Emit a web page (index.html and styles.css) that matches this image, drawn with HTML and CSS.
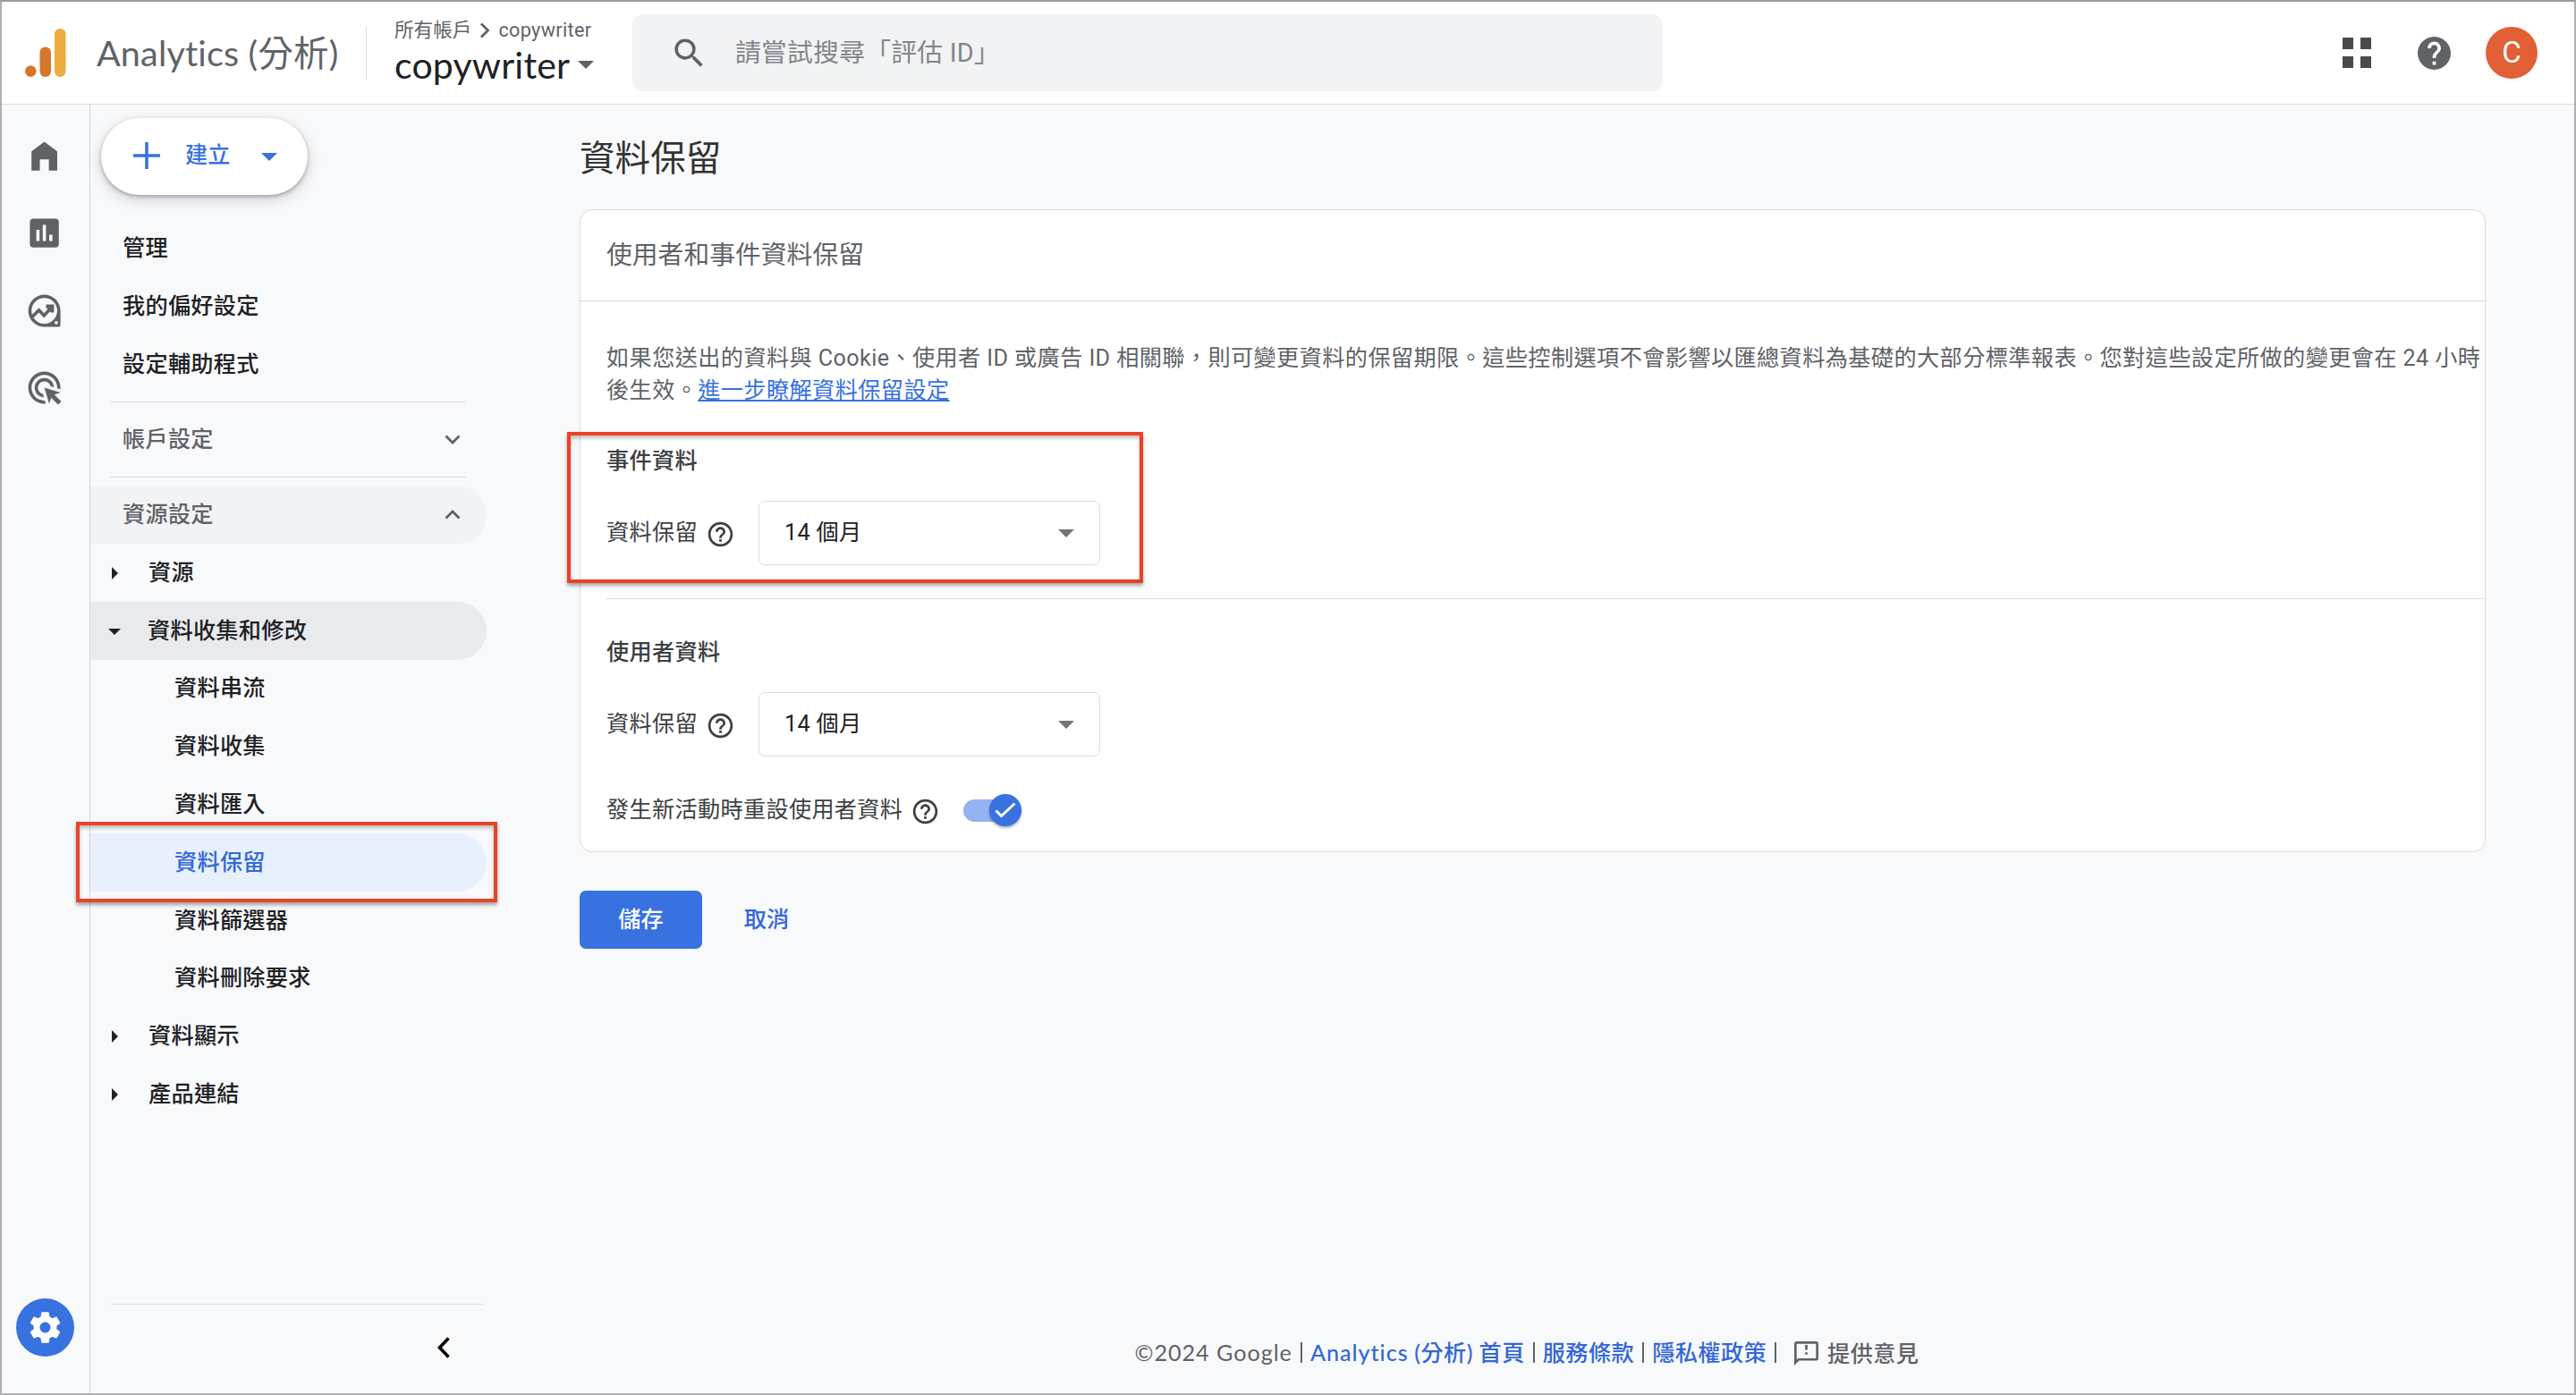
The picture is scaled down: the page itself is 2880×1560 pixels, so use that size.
FILE: index.html
```html
<!DOCTYPE html>
<html lang="zh-TW">
<head>
    <meta charset="UTF-8">
    <meta name="viewport" content="width=device-width, initial-scale=1.0">
    <title>Analytics (分析)</title>
    <link rel="stylesheet" href="styles.css">
</head>
<body>
<div class="app">

    <header class="header">
        <svg class="logo" viewBox="0 0 46 54">
            <rect x="33" y="0" width="12.5" height="54" rx="6.2" fill="#edad3d"/>
            <rect x="16.5" y="20.5" width="12.5" height="33.5" rx="6.2" fill="#d4772c"/>
            <circle cx="6.3" cy="47.6" r="6.3" fill="#d4772c"/>
        </svg>
        <h1 class="product">Analytics (分析)</h1>
        <div class="account">
            <div class="breadcrumb">
                <span>所有帳戶</span>
                <svg class="crumb-arrow" viewBox="0 0 12 18"><path d="M2 1.5 9.5 9 2 16.5" fill="none" stroke="#5f6368" stroke-width="2.8"/></svg>
                <span class="crumb-name">copywriter</span>
            </div>
            <div class="property"><span class="property-name">copywriter</span><i class="caret"></i></div>
        </div>
        <div class="search">
            <svg class="search-icon" viewBox="0 0 24 24"><path d="M15.5 14h-.79l-.28-.27A6.47 6.47 0 0 0 16 9.5 6.5 6.5 0 1 0 9.5 16c1.61 0 3.09-.59 4.23-1.57l.27.28v.79l5 4.99L20.49 19l-4.99-5zm-6 0C7.01 14 5 11.99 5 9.5S7.01 5 9.5 5 14 7.01 14 9.5 11.99 14 9.5 14z"/></svg>
            <span>請嘗試搜尋「評估 ID」</span>
        </div>
        <div class="header-actions">
            <div class="apps"><i></i><i></i><i></i><i></i></div>
            <svg class="help" viewBox="2 2 20 20"><path d="M12 2C6.48 2 2 6.48 2 12s4.48 10 10 10 10-4.48 10-10S17.52 2 12 2zm1 17h-2v-2h2v2zm2.07-7.75l-.9.92C13.45 12.9 13 13.5 13 15h-2v-.5c0-1.1.45-2.1 1.17-2.83l1.24-1.26c.37-.36.59-.86.59-1.41 0-1.1-.9-2-2-2s-2 .9-2 2H8c0-2.21 1.79-4 4-4s4 1.79 4 4c0 .88-.36 1.68-.93 2.25z"/></svg>
            <div class="avatar">C</div>
        </div>
    </header>

    <div class="layout">
        <nav class="rail">
            <svg class="rail-icon" viewBox="0 0 24 24"><path d="M12 3 4 9v12h5.2v-7h5.6v7H20V9z"/></svg>
            <svg class="rail-icon" viewBox="0 0 24 24"><path d="M19 3H5c-1.1 0-2 .9-2 2v14c0 1.1.9 2 2 2h14c1.1 0 2-.9 2-2V5c0-1.1-.9-2-2-2zM9 17H7v-7h2v7zm4 0h-2V7h2v10zm4 0h-2v-4h2v4z"/></svg>
            <svg class="rail-icon" viewBox="0 0 24 24">
                <path fill-rule="evenodd" d="M12 2a10 10 0 1 0 0 20h8.500a1.500 1.500 0 0 0 1.500-1.500V12A10 10 0 0 0 12 2zm0 2a8 8 0 1 1 0 16 8 8 0 0 1 0-16zm7.400 14.400a1 1 0 1 1 0 2 1 1 0 0 1 0-2z"/>
                <path d="m4.600 15.600 4-4 3.200 3.300 4.800-5" fill="none" stroke="#5f6368" stroke-width="2"/>
                <path d="M13 8h5v5h-1.900L13 9.900z"/>
            </svg>
            <svg class="rail-icon" viewBox="0 0 24 24"><path d="M11.710 17.990C8.530 17.840 6 15.220 6 12c0-3.310 2.690-6 6-6 3.220 0 5.840 2.530 5.990 5.710l-2.100-.63C15.480 9.310 13.890 8 12 8c-2.210 0-4 1.790-4 4 0 1.890 1.310 3.480 3.080 3.890l.63 2.100zM22 12c0 .3-.01.6-.04.9l-1.970-.59c.01-.1.01-.21.01-.31 0-4.420-3.580-8-8-8s-8 3.580-8 8 3.580 8 8 8c.1 0 .21 0 .31-.01l.59 1.970c-.3.03-.6.04-.9.04-5.520 0-10-4.480-10-10S6.480 2 12 2s10 4.480 10 10zm-3.770 4.260L22 15l-10-3 3 10 1.260-3.770 4.270 4.270 1.980-1.980-4.280-4.260z"/></svg>
            <div class="admin-btn">
                <svg viewBox="0 0 24 24"><path d="M19.140 12.940c.04-.3.06-.61.06-.94 0-.32-.02-.64-.07-.94l2.030-1.580c.18-.14.23-.41.12-.61l-1.920-3.320c-.12-.22-.37-.29-.59-.22l-2.390.96c-.5-.38-1.030-.7-1.620-.94L14.400 2.810c-.04-.24-.24-.41-.48-.41h-3.840c-.24 0-.43.17-.47.41L9.250 5.350C8.660 5.590 8.120 5.920 7.630 6.290L5.240 5.330c-.22-.08-.47 0-.59.22L2.740 8.870c-.12.21-.08.47.12.61l2.030 1.580c-.05.3-.09.63-.09.94s.02.64.07.94l-2.030 1.580c-.18.14-.23.41-.12.61l1.920 3.320c.12.22.37.29.59.22l2.390-.96c.5.38 1.030.7 1.620.94l.36 2.540c.05.24.24.41.48.41h3.840c.24 0 .44-.17.47-.41l.36-2.540c.59-.24 1.130-.56 1.620-.94l2.390.96c.22.08.47 0 .59-.22l1.920-3.320c.12-.22.07-.47-.12-.61l-2.010-1.580zM12 15.300c-1.820 0-3.300-1.480-3.300-3.300s1.480-3.300 3.300-3.300 3.300 1.480 3.300 3.300-1.480 3.300-3.300 3.300z"/></svg>
            </div>
        </nav>

        <aside class="sidebar">
            <button class="create-btn">
                <svg class="plus" viewBox="0 0 30 30"><path d="M15 0v30M0 15h30" stroke="#3871e0" stroke-width="3.6"/></svg>
                <span>建立</span>
                <i class="caret caret-blue"></i>
            </button>

            <ul class="menu">
                <li class="menu-item">管理</li>
                <li class="menu-item">我的偏好設定</li>
                <li class="menu-item">設定輔助程式</li>
                <li class="menu-divider"></li>
                <li class="menu-item section">帳戶設定
                    <svg class="chevron" viewBox="0 0 18 12"><path d="m1.5 1.5 7.5 7.5 7.5-7.5"/></svg>
                </li>
                <li class="menu-divider"></li>
                <li class="menu-item section open">資源設定
                    <svg class="chevron" viewBox="0 0 18 12"><path d="m1.5 9.5 7.5-7.5 7.5 7.5"/></svg>
                </li>
                <li class="menu-item group"><i class="arrow-right"></i>資源</li>
                <li class="menu-item group expanded"><i class="arrow-down"></i>資料收集和修改</li>
                <li class="menu-item leaf">資料串流</li>
                <li class="menu-item leaf">資料收集</li>
                <li class="menu-item leaf">資料匯入</li>
                <li class="menu-item leaf active">資料保留</li>
                <li class="menu-item leaf">資料篩選器</li>
                <li class="menu-item leaf">資料刪除要求</li>
                <li class="menu-item group"><i class="arrow-right"></i>資料顯示</li>
                <li class="menu-item group"><i class="arrow-right"></i>產品連結</li>
            </ul>

            <div class="sidebar-footer">
                <svg class="collapse" viewBox="0 0 14 24"><path d="M12.5 1.5 2.5 12l10 10.5" fill="none" stroke="#000" stroke-width="3.6"/></svg>
            </div>
        </aside>

        <main class="main">
            <h2 class="page-title">資料保留</h2>

            <section class="card">
                <h3 class="card-header">使用者和事件資料保留</h3>
                <div class="card-body">
                    <p class="card-text">如果您送出的資料與 Cookie、使用者 ID 或廣告 ID 相關聯，則可變更資料的保留期限。這些控制選項不會影響以匯總資料為基礎的大部分標準報表。您對這些設定所做的變更會在 24 小時<br>後生效。<a href="#">進一步瞭解資料保留設定</a></p>

                    <div class="setting">
                        <h4 class="setting-title">事件資料</h4>
                        <div class="field">
                            <span>資料保留</span>
                            <svg class="hint" viewBox="0 0 24 24"><path d="M11 18h2v-2h-2v2zm1-16C6.480 2 2 6.480 2 12s4.480 10 10 10 10-4.480 10-10S17.520 2 12 2zm0 18c-4.410 0-8-3.590-8-8s3.590-8 8-8 8 3.590 8 8-3.590 8-8 8zm0-14c-2.210 0-4 1.790-4 4h2c0-1.100.9-2 2-2s2 .9 2 2c0 2-3 1.750-3 5h2c0-2.250 3-2.500 3-5 0-2.210-1.790-4-4-4z"/></svg>
                            <div class="select">14 個月<i class="caret caret-select"></i></div>
                        </div>
                    </div>

                    <div class="setting bordered">
                        <h4 class="setting-title">使用者資料</h4>
                        <div class="field">
                            <span>資料保留</span>
                            <svg class="hint" viewBox="0 0 24 24"><path d="M11 18h2v-2h-2v2zm1-16C6.480 2 2 6.480 2 12s4.480 10 10 10 10-4.480 10-10S17.520 2 12 2zm0 18c-4.410 0-8-3.590-8-8s3.590-8 8-8 8 3.590 8 8-3.590 8-8 8zm0-14c-2.210 0-4 1.790-4 4h2c0-1.100.9-2 2-2s2 .9 2 2c0 2-3 1.750-3 5h2c0-2.250 3-2.500 3-5 0-2.210-1.790-4-4-4z"/></svg>
                            <div class="select">14 個月<i class="caret caret-select"></i></div>
                        </div>
                        <div class="field field-toggle">
                            <span>發生新活動時重設使用者資料</span>
                            <svg class="hint" viewBox="0 0 24 24"><path d="M11 18h2v-2h-2v2zm1-16C6.480 2 2 6.480 2 12s4.480 10 10 10 10-4.480 10-10S17.520 2 12 2zm0 18c-4.410 0-8-3.590-8-8s3.590-8 8-8 8 3.590 8 8-3.590 8-8 8zm0-14c-2.210 0-4 1.790-4 4h2c0-1.100.9-2 2-2s2 .9 2 2c0 2-3 1.750-3 5h2c0-2.250 3-2.500 3-5 0-2.210-1.790-4-4-4z"/></svg>
                            <div class="toggle">
                                <div class="knob"><svg viewBox="0 0 24 18"><path d="m1.5 9.5 6 6L22.5 1.5" fill="none" stroke="#fff" stroke-width="3"/></svg></div>
                            </div>
                        </div>
                    </div>
                </div>
            </section>

            <div class="actions">
                <button class="btn btn-primary">儲存</button>
                <button class="btn btn-text">取消</button>
            </div>

            <footer class="footer">
                <span class="latin">©2024 Google</span><i class="bar"></i>
                <a href="#"><span class="latin">Analytics</span> (分析) 首頁</a><i class="bar"></i>
                <a href="#">服務條款</a><i class="bar"></i>
                <a href="#">隱私權政策</a><i class="bar"></i>
                <svg class="feedback-icon" viewBox="2 2 20 20"><path d="M20 2H4c-1.1 0-1.99.9-1.99 2L2 22l4-4h14c1.1 0 2-.9 2-2V4c0-1.1-.9-2-2-2zm0 14H5.17L4 17.17V4h16v12zM11 5h2v4h-2zm0 6h2v2h-2z"/></svg>
                <span class="feedback">提供意見</span>
            </footer>
        </main>
    </div>

    <!-- Red callouts over the page -->
    <div class="callout callout-menu"></div>
    <div class="callout callout-event"></div>
</div>
</body>
</html>
```

FILE: styles.css
```css
/* Reset default styles */
* {
    box-sizing: border-box;
}

body, h1, h2, h3, h4, p, ul {
    margin: 0;
    padding: 0;
}

ul {
    list-style: none;
}

svg {
    display: block;
    flex-shrink: 0;
}

button {
    font: inherit;
    border: none;
    padding: 0;
}

/* Global styles */
body {
    font-family: Roboto, "Noto Sans CJK TC", sans-serif;
    font-size: 25.2px;
    line-height: 36px;
    color: #202124;
    background: #f8f9fb;
    overflow: hidden;
}

.app {
    position: relative;
    width: 2880px;
    height: 1560px;
    border: 2px solid #b0b0b2;
    border-top-color: #9d9c9d;
    display: flex;
    flex-direction: column;
    overflow: hidden;
}

.caret {
    width: 0;
    height: 0;
    border: 9px solid transparent;
    border-top-color: #5f6368;
    border-bottom: none;
    flex-shrink: 0;
}

.caret-blue {
    border-top-color: #3871e0;
}

.caret-select {
    border-top-color: #757575;
}

/* Header */
.header {
    height: 115px;
    background: #fff;
    border-bottom: 1px solid #dadce0;
    display: flex;
    align-items: center;
    flex-shrink: 0;
    padding: 0 41px 0 26px;
}

.logo {
    width: 46px;
    height: 54px;
}

.product {
    font-family: Lato, "Noto Sans CJK TC", sans-serif;
    font-size: 39.6px;
    font-weight: 400;
    line-height: 58px;
    letter-spacing: 0.15px;
    color: #5f6368;
    width: 302px;
    margin-left: 34px;
    border-right: 1px solid #dadce0;
    white-space: nowrap;
}

.account {
    width: 265px;
    margin-left: 31px;
    padding-bottom: 5px;
}

.breadcrumb {
    display: flex;
    align-items: center;
    gap: 9px;
    font-size: 21.6px;
    line-height: 32px;
    color: #5f6368;
}

.crumb-name {
    letter-spacing: 0.35px;
}

.crumb-arrow {
    width: 12px;
    height: 18px;
}

.property {
    display: flex;
    align-items: center;
    gap: 9px;
    font-family: Lato, sans-serif;
    font-size: 41px;
    line-height: 46px;
}

.property-name {
    letter-spacing: 0.2px;
}

.search {
    width: 1152px;
    height: 86px;
    margin-left: 1px;
    border-radius: 12px;
    background: #f1f3f4;
    display: flex;
    align-items: center;
    padding-left: 42px;
    gap: 30px;
    font-size: 28.8px;
    letter-spacing: 0.25px;
    color: #80868b;
}

.search-icon {
    width: 43px;
    height: 43px;
    fill: #5f6368;
}

.header-actions {
    display: flex;
    align-items: center;
    margin-left: auto;
}

.apps {
    display: grid;
    grid-template-columns: 12px 12px;
    gap: 8px;
}

.apps i {
    height: 13px;
    background: #4a4a4a;
}

.help {
    width: 37px;
    height: 37px;
    margin: 0 39px 0 52px;
    fill: #5f6368;
}

.avatar {
    width: 58px;
    height: 58px;
    border-radius: 50%;
    background: #e15f34;
    color: #fff;
    font-size: 33px;
    line-height: 58px;
    text-align: center;
}

/* Layout */
.layout {
    display: flex;
    flex: 1;
    min-height: 0;
}

.rail {
    width: 99px;
    border-right: 1px solid #d2d4d7;
    display: flex;
    flex-direction: column;
    align-items: center;
    gap: 43.2px;
    padding: 36px 2px 41px 0;
}

.rail-icon {
    width: 43.2px;
    height: 43.2px;
    fill: #5f6368;
}

.admin-btn {
    width: 65px;
    height: 65px;
    margin-top: auto;
    border-radius: 50%;
    background: #3871e0;
    display: flex;
    align-items: center;
    justify-content: center;
}

.admin-btn svg {
    width: 43px;
    height: 43px;
    fill: #fff;
}

/* Sidebar */
.sidebar {
    width: 443px;
    display: flex;
    flex-direction: column;
    padding: 15px 0 0;
}

.create-btn {
    width: 231px;
    height: 86px;
    margin-left: 12px;
    border-radius: 43px;
    background: #fff;
    color: #3871e0;
    font-weight: 500;
    display: flex;
    align-items: center;
    padding: 0 0 2px 36px;
    box-shadow: 0 2px 4px rgba(60, 64, 67, 0.35), 0 5px 16px rgba(60, 64, 67, 0.22);
}

.plus {
    width: 30px;
    height: 30px;
    margin-right: 28px;
}

.create-btn .caret {
    margin: 2px 0 0 35px;
}

.menu {
    margin-top: 28px;
}

.menu-item {
    height: 64.8px;
    padding-left: 36px;
    display: flex;
    align-items: center;
    border-radius: 0 33px 33px 0;
    font-weight: 500;
    letter-spacing: 0.25px;
}

.menu-divider {
    height: 19.2px;
    margin: 0 23px 0 22px;
    display: flex;
    align-items: center;
}

.menu-divider::after {
    content: "";
    flex: 1;
    height: 1px;
    background: #dadce0;
}

.section {
    color: #5f6368;
    justify-content: space-between;
    padding-right: 29px;
}

.open {
    background: #f1f3f4;
}

.chevron {
    width: 18px;
    height: 12px;
    fill: none;
    stroke: #5f6368;
    stroke-width: 2.8;
}

.group {
    padding-left: 22px;
}

.expanded {
    background: #e8eaed;
}

.arrow-right,
.arrow-down {
    border: 7px solid transparent;
}

.arrow-right {
    border-left-color: #202124;
    border-right: none;
    margin: 0 34px 0 2px;
}

.arrow-down {
    border-top-color: #202124;
    border-bottom: none;
    margin: 2px 30px 0 -2px;
}

.leaf {
    padding-left: 94px;
}

.active {
    background: #e8f0fe;
    color: #3367d6;
}

.sidebar-footer {
    height: 100px;
    margin: auto 5px 0 23px;
    border-top: 1px solid #dadce0;
    display: flex;
    justify-content: flex-end;
    padding: 36px 36px 0 0;
}

.collapse {
    width: 14px;
    height: 24px;
}

/* Main content */
.main {
    flex: 1;
    display: flex;
    flex-direction: column;
    padding: 0 99px 0 104px;
}

.page-title {
    height: 117px;
    padding-top: 2px;
    font-size: 39.6px;
    font-weight: 400;
    line-height: 117px;
    color: #333;
}

.card {
    background: #fff;
    border: 1px solid #dadce0;
    border-radius: 14.4px;
}

.card-header {
    height: 102px;
    padding-left: 29px;
    border-bottom: 1px solid #dadce0;
    font-size: 28.8px;
    font-weight: 400;
    line-height: 101px;
    color: #5f6368;
}

.card-body {
    padding: 46px 0 28px 29px;
    color: #3c4043;
}

.card-text {
    color: #5f6368;
    letter-spacing: 0.38px;
    white-space: nowrap;
}

.card-text a {
    color: #3871e0;
}

.setting {
    padding: 43px 0 37px;
}

.bordered {
    border-top: 1px solid #dadce0;
    padding: 42px 0 0;
}

.setting-title {
    font-size: 25.2px;
    font-weight: 500;
    letter-spacing: 0.3px;
}

.field {
    display: flex;
    align-items: center;
    margin-top: 26px;
    letter-spacing: 0.3px;
}

.field-toggle {
    margin-top: 42px;
}

.hint {
    width: 33px;
    height: 33px;
    margin: 2px 26px 0 9px;
    fill: #3c4043;
}

.select {
    width: 382px;
    height: 72px;
    border: 1px solid #dadce0;
    border-radius: 7px;
    display: flex;
    align-items: center;
    justify-content: space-between;
    padding: 0 28px;
    color: #202124;
}

.toggle {
    width: 65px;
    height: 25px;
    border-radius: 13px;
    background: #96b2f1;
    display: flex;
    align-items: center;
    justify-content: flex-end;
}

.knob {
    width: 36px;
    height: 36px;
    border-radius: 50%;
    background: #3871e0;
    box-shadow: 0 2px 3px rgba(0, 0, 0, 0.3);
    display: flex;
    align-items: center;
    justify-content: center;
}

.knob svg {
    width: 24px;
    height: 18px;
}

.actions {
    display: flex;
    margin-top: 43px;
}

.btn {
    height: 65px;
    border-radius: 7px;
    font-weight: 500;
}

.btn-primary {
    width: 137px;
    background: #3871e0;
    color: #fff;
}

.btn-text {
    width: 144px;
    background: none;
    color: #3367d6;
}

/* Footer */
.footer {
    margin-top: auto;
    padding: 0 13px 27px 0;
    display: flex;
    align-items: center;
    justify-content: center;
    font-family: Lato, "Noto Sans CJK TC", sans-serif;
    letter-spacing: 0.4px;
    color: #5f6368;
}

.footer a {
    color: #3367d6;
    font-weight: 500;
    text-decoration: none;
}

.footer .latin {
    letter-spacing: 0.95px;
}

.bar {
    width: 2px;
    height: 23px;
    margin: 0 9px;
    background: #5f6368;
}

.feedback-icon {
    width: 27px;
    height: 27px;
    margin: 3px 10px 0 11px;
    fill: #5f6368;
}

.feedback {
    font-weight: 500;
    margin-top: 2px;
}

/* Callouts */
.callout {
    position: absolute;
    border: 4px solid #ea4226;
    box-shadow: 0 3px 4px rgba(0, 0, 0, 0.35), inset 0 3px 4px rgba(0, 0, 0, 0.25);
}

.callout-menu {
    left: 83px;
    top: 917px;
    width: 471px;
    height: 90px;
}

.callout-event {
    left: 632px;
    top: 481px;
    width: 644px;
    height: 169px;
}
```
